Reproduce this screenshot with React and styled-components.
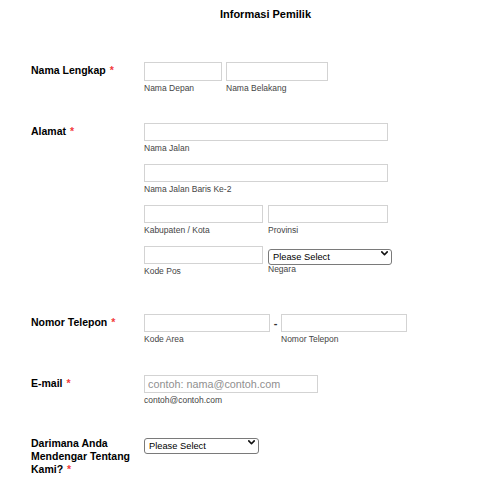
import React from "react";
import styled, { createGlobalStyle } from "styled-components";

const Global = createGlobalStyle`
  html, body { margin: 0; padding: 0; background: #fff; }
  body { font-family: "Liberation Sans", Arial, sans-serif; color: #000; }
  * { box-sizing: border-box; }
`;

const Page = styled.div`
  width: 500px;
  height: 484px;
  overflow: hidden;
  padding: 8px 0 0 31px;
`;

const Title = styled.h1`
  margin: 0 0 41px;
  font-size: 11px;
  line-height: 13px;
  font-weight: 700;
  text-align: center;
`;

const Form = styled.div`
  display: flex;
  flex-direction: column;
`;

const Row = styled.div`
  display: grid;
  grid-template-columns: 113px 1fr;
  align-items: start;
  margin-bottom: ${(p) => p.$after ?? 30}px;
`;

const Label = styled.div`
  width: 104px;
  padding-top: 2px;
  font-size: 10.5px;
  line-height: 13px;
  font-weight: 700;
  color: #000;
`;

const Req = styled.span`
  color: #f23a3c;
  margin-left: 4px;
  font-weight: 700;
`;

const Controls = styled.div`
  display: flex;
  flex-direction: column;
  gap: 10px;
`;

const Line = styled.div`
  display: flex;
  align-items: flex-start;
  gap: ${(p) => p.$gap ?? 5}px;
`;

const Field = styled.div`
  display: flex;
  flex-direction: column;
  width: ${(p) => p.$w}px;
`;

const TextInput = styled.input`
  width: 100%;
  height: ${(p) => p.$h ?? 18}px;
  margin: 0;
  padding: 0 3px;
  border: 1px solid #d3d3d3;
  border-radius: 0;
  background: #fff;
  font-family: "Liberation Sans", Arial, sans-serif;
  font-size: 10.8px;
  color: #000;
  outline: none;
  &::placeholder { color: #8f8f8f; }
`;

const SelectWrap = styled.div`
  position: relative;
  width: 100%;
  height: 16px;
`;

const Select = styled.select`
  appearance: none;
  -webkit-appearance: none;
  width: 100%;
  height: 16px;
  margin: 0;
  padding: 0 14px 0 4px;
  border: 1px solid #7a7a7a;
  border-radius: 3px;
  background: #fff;
  font-family: "Liberation Sans", Arial, sans-serif;
  font-size: 9.3px;
  line-height: 14px;
  color: #000;
  outline: none;
`;

const Chevron = styled.svg`
  position: absolute;
  right: 4px;
  top: 5px;
  width: 7px;
  height: 5px;
  pointer-events: none;
`;

const Sub = styled.div`
  margin-top: 2px;
  font-size: 8.5px;
  line-height: 11px;
  color: #444;
  white-space: nowrap;
`;

const Dash = styled.div`
  width: 11px;
  height: 18px;
  display: flex;
  align-items: center;
  justify-content: center;
  font-size: 11px;
  font-weight: 700;
  color: #333;
`;

const Dropdown = () => (
  <SelectWrap>
    <Select defaultValue="">
      <option value="">Please Select</option>
    </Select>
    <Chevron viewBox="0 0 7 5">
      <path d="M0.8 0.9 L3.5 3.7 L6.2 0.9" fill="none" stroke="#111" strokeWidth="1.6" strokeLinecap="round" strokeLinejoin="round" />
    </Chevron>
  </SelectWrap>
);

export default function App() {
  return (
    <Page>
      <Global />
      <Title>Informasi Pemilik</Title>
      <Form>
        <Row $after={29}>
          <Label>Nama Lengkap<Req>*</Req></Label>
          <Controls>
            <Line $gap={4}>
              <Field $w={78}><TextInput $h={19} /><Sub>Nama Depan</Sub></Field>
              <Field $w={102}><TextInput $h={19} /><Sub>Nama Belakang</Sub></Field>
            </Line>
          </Controls>
        </Row>

        <Row $after={37}>
          <Label>Alamat<Req>*</Req></Label>
          <Controls>
            <Field $w={244}><TextInput /><Sub>Nama Jalan</Sub></Field>
            <Field $w={244}><TextInput /><Sub>Nama Jalan Baris Ke-2</Sub></Field>
            <Line>
              <Field $w={119}><TextInput /><Sub>Kabupaten / Kota</Sub></Field>
              <Field $w={120}><TextInput /><Sub>Provinsi</Sub></Field>
            </Line>
            <Line>
              <Field $w={119}><TextInput /><Sub>Kode Pos</Sub></Field>
              <Field $w={124}><Dropdown /><Sub>Negara</Sub></Field>
            </Line>
          </Controls>
        </Row>

        <Row>
          <Label>Nomor Telepon<Req>*</Req></Label>
          <Controls>
            <Line $gap={0}>
              <Field $w={126}><TextInput /><Sub>Kode Area</Sub></Field>
              <Dash>-</Dash>
              <Field $w={126}><TextInput /><Sub>Nomor Telepon</Sub></Field>
            </Line>
          </Controls>
        </Row>

        <Row $after={29}>
          <Label>E-mail<Req>*</Req></Label>
          <Controls>
            <Field $w={174}>
              <TextInput placeholder="contoh: nama@contoh.com" />
              <Sub>contoh@contoh.com</Sub>
            </Field>
          </Controls>
        </Row>

        <Row>
          <Label>Darimana Anda Mendengar Tentang Kami?<Req>*</Req></Label>
          <Controls>
            <Field $w={115}><Dropdown /></Field>
          </Controls>
        </Row>
      </Form>
    </Page>
  );
}
